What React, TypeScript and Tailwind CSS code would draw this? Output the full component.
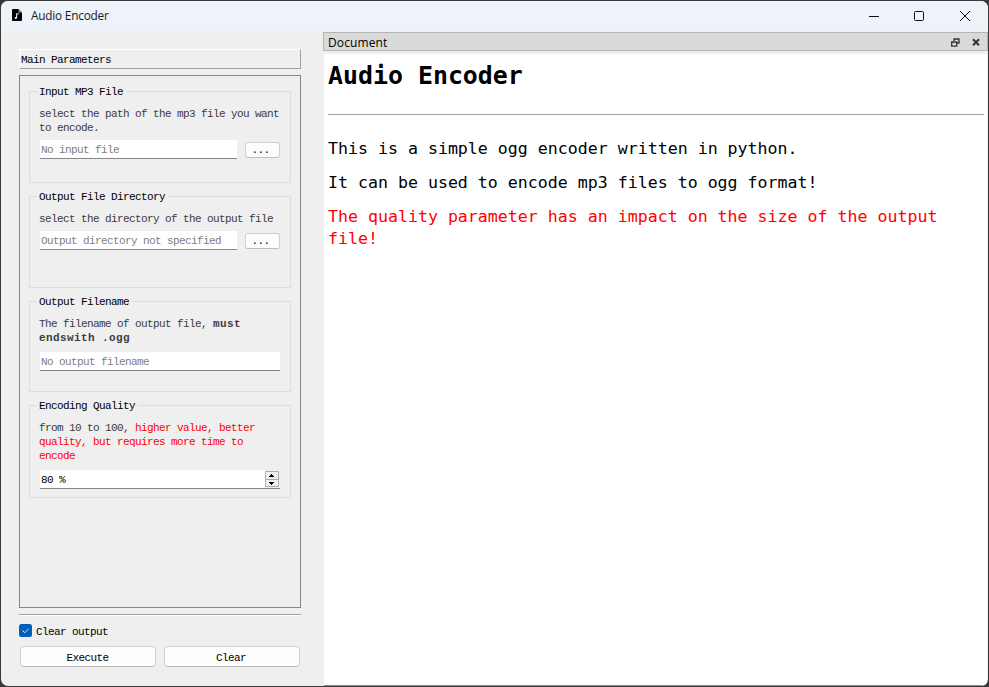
import type { ReactNode } from "react";

function Group({ title, className, children }: { title: string; className: string; children: ReactNode }) {
  return (
    <fieldset className={`w-[262px] border border-[#dcdcdc] pl-[9px] pt-[10px] ${className}`}>
      <legend className="-ml-[2px] h-3 pl-[2px] pr-[3px] leading-[14px] text-black">{title}</legend>
      {children}
    </fieldset>
  );
}

function Field({ text, className }: { text: string; className: string }) {
  return (
    <div className={`h-[19px] border-b border-[#868686] bg-white pl-[1px] leading-[20px] text-[#808080] ${className}`}>
      {text}
    </div>
  );
}

function BrowseRow({ text }: { text: string }) {
  return (
    <div className="mt-[5px] flex items-center gap-2 pl-[1px]">
      <Field text={text} className="w-[197px]" />
      <button className="h-4 w-[35px] rounded-[3px] border border-[#d0d0d0] border-b-[#bcbcbc] bg-[#fdfdfd] pr-1 leading-[14px] text-black">
        ...
      </button>
    </div>
  );
}

function TitleBar() {
  return (
    <header className="flex h-[30px] shrink-0 items-center bg-[#eef3f9] pl-[11px] font-['Open_Sans','Noto_Sans',sans-serif] text-[12px] text-[#1a1a1a]">
      <svg width="10" height="12" viewBox="0 0 10 12" className="mb-[2px] mr-[9px]">
        <path d="M1 0h5.5L10 3.5V11a1 1 0 0 1-1 1H1a1 1 0 0 1-1-1V1a1 1 0 0 1 1-1z" fill="#000" />
        <path d="M6.5 0v3.5H10z" fill="#8a8f95" />
        <path d="M4.6 9V4.8h2.2" stroke="#fff" fill="none" />
        <circle cx="3.8" cy="9" r="1.1" fill="#fff" />
      </svg>
      <span className="text-[11.8px] tracking-[-0.2px]">Audio Encoder</span>
      <svg width="112" height="14" viewBox="0 0 112 14" className="ml-auto mr-[12px]" fill="none" stroke="#111">
        <path d="M5 7.5h10" />
        <rect x="50.5" y="2.5" width="9" height="9" rx="1" />
        <path d="M96 2l10 10M106 2L96 12" />
      </svg>
    </header>
  );
}

export default function App() {
  return (
    <div className="h-[687px] w-[989px] overflow-hidden bg-[#39393c] p-px">
      <div className="flex h-full flex-col overflow-hidden rounded-[7px] bg-[#efefef]">
        <TitleBar />
        <div className="flex min-h-0 flex-1">
          <aside className="flex w-[322px] shrink-0 flex-col pl-[18px] pt-[18px] font-['Liberation_Mono',monospace] text-[11px] leading-3 tracking-[-0.6px] text-black">
            <div className="h-5 w-[282px] border border-b-[#a0a0a0] border-l-white border-r-[#a0a0a0] border-t-white pl-[1px] leading-[20px]">
              Main Parameters
            </div>
            <div className="mt-[6px] flex h-[533px] w-[282px] flex-col gap-[7px] border border-[#828790] pl-[9px] pt-[9px]">
              <Group title="Input MP3 File" className="h-[98px]">
                <p className="whitespace-nowrap leading-[14px] text-[#3c3c3c]">
                  select the path of the mp3 file you want
                  <br />
                  to encode.
                </p>
                <BrowseRow text="No input file" />
              </Group>
              <Group title="Output File Directory" className="h-[98px]">
                <p className="whitespace-nowrap leading-[14px] text-[#3c3c3c]">select the directory of the output file</p>
                <BrowseRow text="Output directory not specified" />
              </Group>
              <Group title="Output Filename" className="h-[97px]">
                <p className="whitespace-nowrap leading-[14px] text-[#3c3c3c]">
                  The filename of output file, <b className="tracking-[0.4px]">must</b>
                  <br />
                  <b className="tracking-[0.4px]">endswith .ogg</b>
                </p>
                <Field text="No output filename" className="ml-[1px] mt-[7px] w-[240px]" />
              </Group>
              <Group title="Encoding Quality" className="h-[99px]">
                <p className="whitespace-nowrap leading-[14px] text-[#3c3c3c]">
                  from 10 to 100,{" "}
                  <span className="text-[#ff0000]">
                    higher value, better
                    <br />
                    quality, but requires more time to
                    <br />
                    encode
                  </span>
                </p>
                <div className="ml-[1px] mt-[7px] flex h-[19px] w-[240px] justify-between border-b border-[#868686] bg-white pl-[1px]">
                  <span className="leading-[20px] text-black">80 %</span>
                  <svg width="15" height="18" viewBox="0 0 15 18" className="bg-[#efefef]">
                    <path d="M.5 1.5h13v15H.5zM.5 9.5h13" fill="#f0f0f0" stroke="#adadad" />
                    <path d="M4 7h5V6H8V5H7V4H6v1H5v1H4zM4 12h5v1H8v1H7v1H6v-1H5v-1H4z" fill="#000" />
                  </svg>
                </div>
              </Group>
            </div>
            <div className="mt-[6px] h-[2px] w-[282px] border-b border-t border-b-white border-t-[#a0a0a0]" />
            <label className="mt-2 flex h-[13px] items-center gap-1">
              <svg width="13" height="13" viewBox="0 0 13 13">
                <rect width="13" height="13" rx="2.5" fill="#005fb8" />
                <path d="M3.5 6.5l2.2 2.2L9.7 4.7" stroke="#d5e5f5" fill="none" />
              </svg>
              <span className="pt-[2px]">Clear output</span>
            </label>
            <div className="ml-[1px] mt-[9px] flex gap-2">
              <button className="h-[21px] w-[136px] rounded-[4px] border border-[#d0d0d0] border-b-[#bcbcbc] bg-[#fdfdfd] pr-[1px] pt-[2px]">
                Execute
              </button>
              <button className="h-[21px] w-[136px] rounded-[4px] border border-[#d0d0d0] border-b-[#bcbcbc] bg-[#fdfdfd] pr-[2px] pt-[2px]">
                Clear
              </button>
            </div>
          </aside>
          <main className="flex flex-1 flex-col pt-px">
            <div className="flex h-[19px] items-center border border-[#b4b4b4] bg-[#dadada] pl-[4px] pr-[6px] font-['Open_Sans','Noto_Sans',sans-serif] text-[12px] leading-none text-black">
              <span className="pt-[2px] tracking-[0.1px]">Document</span>
              <svg width="30" height="9" viewBox="0 0 30 9" className="ml-auto mt-[1px]" fill="none" stroke="#333">
                <path d="M3 3V1h5v4H6" strokeWidth="1.3" />
                <path d="M.7 4h5v4.2h-5z" strokeWidth="1.3" />
                <path d="M22 1.2l6 6M28 1.2l-6 6" strokeWidth="2" />
              </svg>
            </div>
            <article className="ml-px mr-px mt-[3px] flex-1 border-b border-[#8a8a8a] bg-white pl-1 pr-[3px] font-['DejaVu_Sans_Mono',monospace] text-[16.6px] leading-[22px] text-black">
              <h1 className="pt-[7px] text-[24.9px] font-bold leading-[30px]">Audio Encoder</h1>
              <hr className="mt-[23px] border-[#a3a3a3]" />
              <p className="mt-[23px]">This is a simple ogg encoder written in python.</p>
              <p className="mt-3">It can be used to encode mp3 files to ogg format!</p>
              <p className="mt-3 text-[#ff0000]">
                The quality parameter has an impact on the size of the output
                <br />
                file!
              </p>
            </article>
          </main>
        </div>
      </div>
    </div>
  );
}
